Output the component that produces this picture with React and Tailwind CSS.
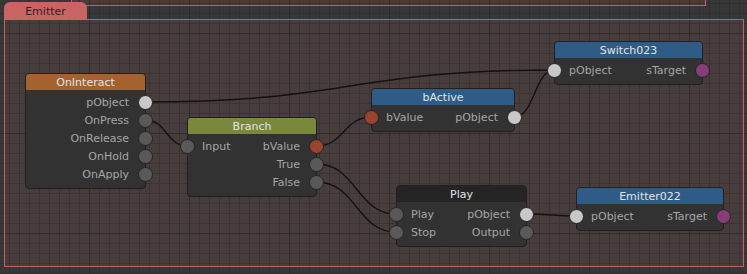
import React from "react";

const pinColors = {
  light: "bg-[#c8c8c8]",
  dark: "bg-[#595959]",
  red: "bg-[#9a432e]",
  purple: "bg-[#853e77]",
};

const nodes = [
  {
    title: "OnInteract",
    box: "left-[25px] top-[73px] w-[121px]",
    head: "bg-[#a4622e]",
    rows: [
      { right: "pObject", rp: "light" },
      { right: "OnPress", rp: "dark" },
      { right: "OnRelease", rp: "dark" },
      { right: "OnHold", rp: "dark" },
      { right: "OnApply", rp: "dark" },
    ],
  },
  {
    title: "Branch",
    box: "left-[187px] top-[117px] w-[130px]",
    head: "bg-[#7a883e]",
    rows: [
      { left: "Input", lp: "dark", right: "bValue", rp: "red" },
      { right: "True", rp: "dark" },
      { right: "False", rp: "dark" },
    ],
  },
  {
    title: "bActive",
    box: "left-[371px] top-[88px] w-[144px]",
    head: "bg-[#2f5c86]",
    rows: [{ left: "bValue", lp: "red", right: "pObject", rp: "light" }],
  },
  {
    title: "Switch023",
    box: "left-[554px] top-[41px] w-[149px]",
    head: "bg-[#2f5c86]",
    rows: [{ left: "pObject", lp: "light", right: "sTarget", rp: "purple" }],
  },
  {
    title: "Play",
    box: "left-[396px] top-[185px] w-[131px]",
    head: "bg-[#252525]",
    rows: [
      { left: "Play", lp: "dark", right: "pObject", rp: "light" },
      { left: "Stop", lp: "dark", right: "Output", rp: "dark" },
    ],
  },
  {
    title: "Emitter022",
    box: "left-[576px] top-[187px] w-[148px]",
    head: "bg-[#2f5c86]",
    rows: [{ left: "pObject", lp: "light", right: "sTarget", rp: "purple" }],
  },
];

const wires = [
  [145.5, 102, 554.5, 70],
  [145.5, 120, 187.5, 146],
  [316.5, 146, 371.5, 117],
  [514.5, 117, 554.5, 70],
  [316.5, 164, 396.5, 214],
  [316.5, 182, 396.5, 232],
  [526.5, 214, 576.5, 216],
];

const wirePath = ([x1, y1, x2, y2]) => {
  const d = Math.max(Math.abs(x2 - x1) * 0.5, 20);
  return `M${x1} ${y1} C${x1 + d} ${y1}, ${x2 - d} ${y2}, ${x2} ${y2}`;
};

const gridDark =
  "bg-[#373737] [background-image:linear-gradient(to_right,#2b2b2b_1px,transparent_1px),linear-gradient(to_bottom,#2b2b2b_1px,transparent_1px),linear-gradient(to_right,#303030_1px,transparent_1px),linear-gradient(to_bottom,#303030_1px,transparent_1px)] [background-size:100px_100px,100px_100px,10px_10px,10px_10px] [background-position:89px_33px,89px_33px,9px_3px,9px_3px] bg-fixed";

const gridRed =
  "bg-[#483d3d] [background-image:linear-gradient(to_right,#332a2a_1px,transparent_1px),linear-gradient(to_bottom,#332a2a_1px,transparent_1px),linear-gradient(to_right,#3d3333_1px,transparent_1px),linear-gradient(to_bottom,#3d3333_1px,transparent_1px)] [background-size:100px_100px,100px_100px,10px_10px,10px_10px] [background-position:89px_33px,89px_33px,9px_3px,9px_3px] bg-fixed";

const Pin = ({ color, side }) => (
  <span
    className={`absolute top-[1.5px] h-[15px] w-[15px] rounded-full border border-[#242424] ${pinColors[color]} ${
      side === "left" ? "-left-[8px]" : "-right-[8px]"
    }`}
  />
);

const Node = ({ node }) => (
  <div
    className={`absolute ${node.box} rounded-[4px] border border-[#202020] bg-[#323232] pb-[5px]`}
  >
    <div
      className={`flex h-[16px] items-center justify-center rounded-t-[3px] ${node.head} text-[11px] leading-none text-[#e2e2e2]`}
    >
      {node.title}
    </div>
    <div className="pt-[3px]">
      {node.rows.map((row, i) => (
        <div
          key={i}
          className="relative flex h-[18px] items-center justify-between pl-[14px] pr-[16px] text-[11px] leading-none text-[#a6a6a6]"
        >
          {row.lp && <Pin color={row.lp} side="left" />}
          <span>{row.left || ""}</span>
          <span>{row.right || ""}</span>
          {row.rp && <Pin color={row.rp} side="right" />}
        </div>
      ))}
    </div>
  </div>
);

export default function App() {
  return (
    <div
      className={`relative h-[274px] w-[747px] overflow-hidden ${gridDark} font-['DejaVu_Sans',sans-serif]`}
    >
      {/* group above, only its bottom edge shows */}
      <div
        className={`absolute left-[71px] -top-[10px] h-[16px] w-[635px] border border-[#c65f5f] ${gridRed}`}
      />

      {/* Emitter group */}
      <div
        className={`absolute left-[4px] top-[19px] h-[248px] w-[740px] border border-[#c65f5f] ${gridRed}`}
      />
      <div className="absolute left-[4px] top-[2px] flex h-[18px] w-[83px] items-center justify-center rounded-t-[6px] bg-[#c86464] text-[11px] leading-none text-[#3a1b1b]">
        Emitter
      </div>

      <svg className="absolute inset-0" width="747" height="274">
        {wires.map((w, i) => (
          <path
            key={i}
            d={wirePath(w)}
            fill="none"
            stroke="#121212"
            strokeWidth="1.4"
          />
        ))}
      </svg>

      {nodes.map((n) => (
        <Node key={n.title} node={n} />
      ))}
    </div>
  );
}
